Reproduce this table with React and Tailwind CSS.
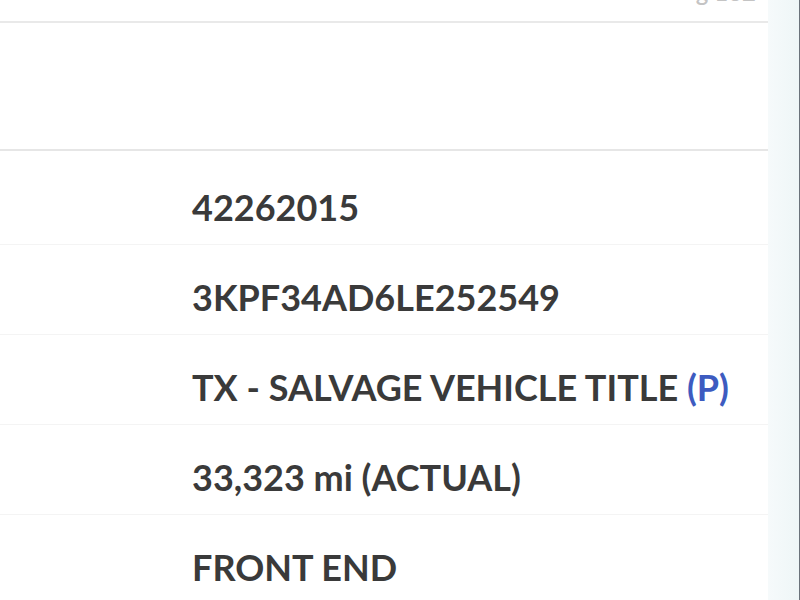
import React from 'react';

const rows = [
  { value: '42262015' },
  { value: '3KPF34AD6LE252549' },
  { value: 'TX - SALVAGE VEHICLE TITLE', extra: '(P)' },
  { value: '33,323 mi (ACTUAL)' },
  { value: 'FRONT END' },
];

const App = () => {
  return (
    <div className="flex h-[600px] w-[800px] overflow-hidden bg-white font-['Lato','Liberation_Sans',sans-serif]">
      <div className="w-[768px] shrink-0">
        {/* top bar, mostly scrolled off */}
        <div className="relative h-[23px] border-b-2 border-[#e9e9e9]">
          <span className="absolute right-[12px] top-[-20px] text-[24px] font-semibold leading-[24px] text-[#c4c4c4]">
            g 132
          </span>
        </div>

        {/* blank header section */}
        <div className="h-[128px] border-b-2 border-[#e6e6e6]" />

        {/* detail rows */}
        {rows.map((row, i) => (
          <div
            key={i}
            className={`${i === 0 ? 'h-[94px] pt-[38px]' : 'h-[90px] pt-[34px]'} border-b border-[#f4f4f4] pl-[192px]`}
          >
            <span className="text-[36px] font-bold leading-[36px] text-[#3a3a3a]">
              {row.value}
              {row.extra && <span className="text-[#3d5bc0]"> {row.extra}</span>}
            </span>
          </div>
        ))}
      </div>

      {/* right side strip */}
      <div className="flex-1 border-r border-[#6b737b] bg-gradient-to-r from-[#f6fafb] to-[#eef6f7]" />
    </div>
  );
};

export default App;
